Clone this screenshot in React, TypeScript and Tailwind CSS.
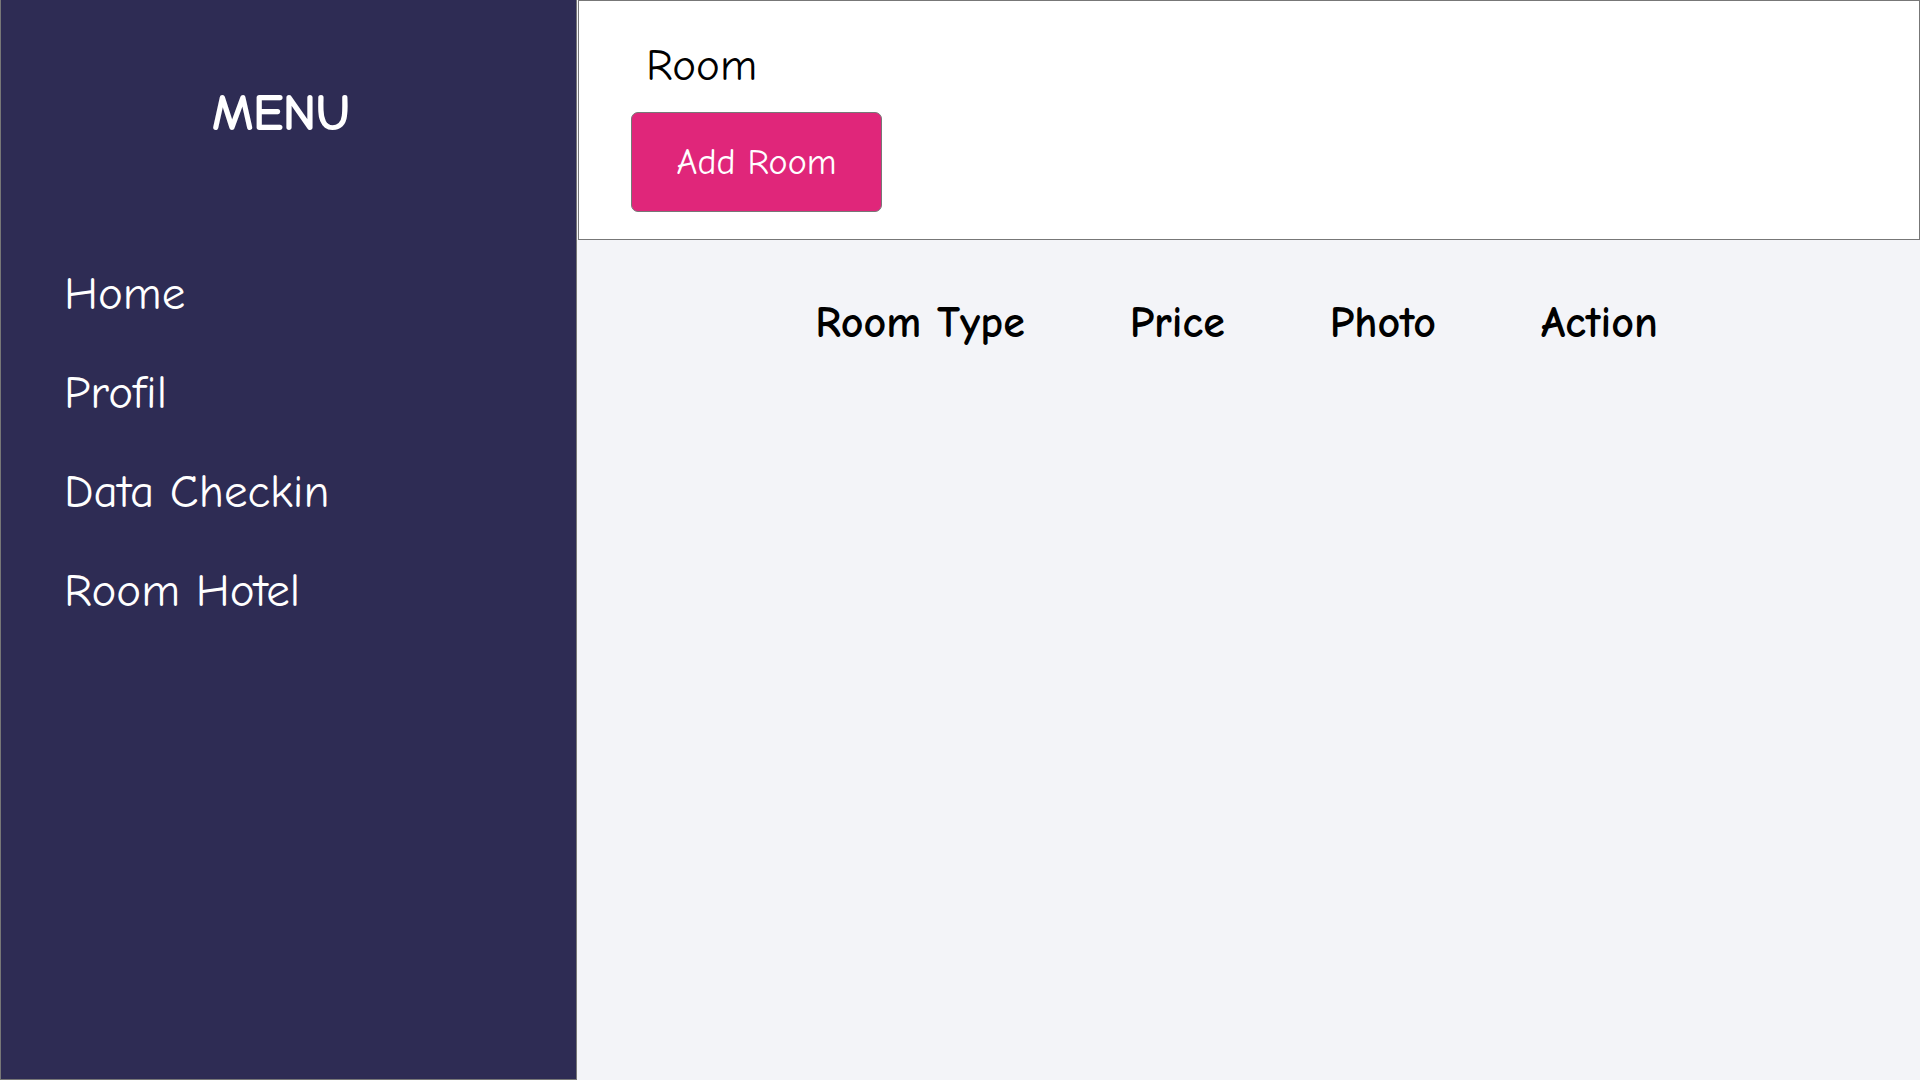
const FONT = "font-['Comic_Sans_MS','Comic_Neue','Noto_Sans',sans-serif]";

const menuItems = ["Home", "Profil", "Data Checkin", "Room Hotel"];
const columns = ["Room Type", "Price", "Photo", "Action"];

function Sidebar() {
  return (
    <aside className="flex w-[577px] shrink-0 flex-col border-b border-l border-r border-[#777] bg-[#2e2c54] text-white">
      <div className="pt-[78px] pr-[16px] text-center text-[52px] font-bold leading-[70px] tracking-[-1px]">
        MENU
      </div>
      <nav className="mt-[119px] flex flex-col gap-[45px] pl-[63px]">
        {menuItems.map((item) => (
          <a key={item} href="#" className="text-[47px] leading-[54px]">
            {item}
          </a>
        ))}
      </nav>
    </aside>
  );
}

export default function App() {
  return (
    <div className={`flex h-screen w-screen ${FONT}`}>
      <Sidebar />
      <main className="flex min-w-0 flex-1 flex-col bg-[#f3f4f8]">
        <header className="ml-[1px] flex h-[240px] flex-col border border-[#777] bg-white pl-[52px]">
          <h1 className="mt-[36px] pl-[15px] text-[45px] leading-[56px] text-black">Room</h1>
          <button
            type="button"
            className="mt-[19px] h-[100px] w-[251px] rounded-[7px] border border-[#777] bg-[#e0267a] pt-[2px] text-[36px] text-white"
          >
            Add Room
          </button>
        </header>
        <div className="flex justify-center gap-[105px] pt-[56px] pr-[24px]">
          {columns.map((c) => (
            <div key={c} className="text-[44px] font-bold leading-[54px] text-black">
              {c}
            </div>
          ))}
        </div>
      </main>
    </div>
  );
}
